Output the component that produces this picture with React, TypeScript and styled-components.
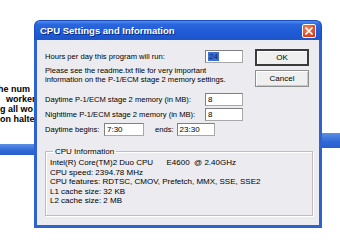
import React from 'react';
import styled, { createGlobalStyle } from 'styled-components';

const GlobalStyle = createGlobalStyle`
  html, body {
    margin: 0;
    padding: 0;
    background: #ffffff;
  }
  * {
    box-sizing: border-box;
  }
`;

const Desktop = styled.div`
  position: relative;
  width: 340px;
  height: 249px;
  overflow: hidden;
  background: #ffffff;
  font-family: 'Liberation Sans', Arial, sans-serif;
`;

// the window behind the dialog, only its left edge shows
const BackWindow = styled.div`
  position: absolute;
  left: 0;
  top: 0;
  width: 34px;
  height: 160px;
  background: #ffffff;
  overflow: hidden;
`;

const BackText = styled.div`
  padding-top: 84px;
  font-size: 9px;
  font-weight: bold;
  line-height: 10px;
  color: #000;
  white-space: pre;
`;

const BackLine = styled.div<{ $indent: number }>`
  text-indent: ${(p) => p.$indent}px;
`;

const BackBar = styled.div<{ $top: number; $height: number }>`
  margin-top: ${(p) => p.$top}px;
  height: ${(p) => p.$height}px;
  background: linear-gradient(#5b8ee6, #2f68d6 60%, #2a5fcc);
`;

// title bar of another window peeking out on the right
const SideBar = styled.div`
  position: absolute;
  left: 322px;
  top: 133px;
  width: 18px;
  height: 15px;
  background: linear-gradient(#5b8ee6, #2f68d6 60%, #2a5fcc);
`;

const Dialog = styled.div`
  position: absolute;
  left: 34px;
  top: 20px;
  width: 288px;
  height: 208px;
  display: flex;
  flex-direction: column;
`;

const TitleBar = styled.div`
  height: 20px;
  display: flex;
  align-items: center;
  justify-content: space-between;
  padding: 0 5px 0 5px;
  border-radius: 6px 6px 0 0;
  background: linear-gradient(
    #4f8df0 0%,
    #2a66dc 18%,
    #1f5bd6 60%,
    #1c55cc 100%
  );
  border: 1px solid #1a4bbf;
  border-bottom: none;
`;

const Title = styled.span`
  color: #ffffff;
  font-size: 9.5px;
  font-weight: bold;
  text-shadow: 1px 1px 0 #0a2a80;
`;

const CloseButton = styled.div`
  width: 14px;
  height: 14px;
  border: 1px solid #ffffff;
  border-radius: 2px;
  background: radial-gradient(circle at 35% 30%, #f2865f, #d9451d 70%, #c23a16);
  display: flex;
  align-items: center;
  justify-content: center;
`;

const Body = styled.div`
  flex: 1;
  display: flex;
  flex-direction: column;
  background: #ecebef;
  border: 3px solid #2c62d2;
  border-top: none;
  padding: 9px 8px 9px 8px;
  font-size: 7.6px;
  color: #000;
`;

const TopSection = styled.div`
  display: flex;
  gap: 12px;
`;

const Form = styled.div`
  width: 198px;
  margin-top: 1px;
  display: flex;
  flex-direction: column;
`;

const Row = styled.div<{ $gap: number }>`
  display: flex;
  align-items: center;
  justify-content: space-between;
  margin-top: ${(p) => p.$gap}px;
  height: 13px;
`;

const InlineRow = styled.div`
  display: flex;
  align-items: center;
  margin-top: 2px;
  height: 13px;
`;

const Label = styled.span<{ $width?: number; $ml?: number }>`
  white-space: nowrap;
  ${(p) => (p.$width ? `width: ${p.$width}px;` : '')}
  margin-left: ${(p) => p.$ml ?? 0}px;
`;

const Para = styled.p`
  margin: 3px 0 0 0;
  line-height: 9px;
`;

const Field = styled.div<{ $width: number; $ml?: number }>`
  width: ${(p) => p.$width}px;
  height: 13px;
  margin-left: ${(p) => p.$ml ?? 0}px;
  background: #ffffff;
  border: 1px solid #a8a8a8;
  border-top-color: #808080;
  border-left-color: #808080;
  display: flex;
  align-items: center;
  padding-left: 2px;
  line-height: 11px;
  font-size: 8px;
`;

const Selected = styled.span`
  background: #3a6fd0;
  color: #0f2460;
  padding: 0 1px;
  line-height: 9px;
`;

const Buttons = styled.div`
  display: flex;
  flex-direction: column;
  gap: 4px;
`;

const Button = styled.div<{ $default?: boolean }>`
  width: 54px;
  height: 17px;
  display: flex;
  align-items: center;
  justify-content: center;
  font-size: 8px;
  background: #efeff0;
  border: ${(p) => (p.$default ? '2px solid #3a3a3a' : '1px solid #8f8f8f')};
  box-shadow: ${(p) =>
    p.$default ? 'inset 1px 1px 0 #fff' : 'inset 1px 1px 0 #fff, inset -1px -1px 0 #c8c8c8'};
`;

const GroupBox = styled.fieldset`
  margin: 11px -2px 0 0;
  padding: 2px 5px 0 4px;
  border: 1px solid #bdbdbd;
  box-shadow: 1px 1px 0 #ffffff, inset 1px 1px 0 #ffffff;
  flex: 1;
  min-width: 0;
`;

const Legend = styled.legend`
  padding: 0 2px;
  margin-left: 3px;
  line-height: 9px;
  font-size: 8px;
`;

const InfoLine = styled.div`
  line-height: 9.5px;
  font-size: 8px;
  white-space: pre;
`;

const cpuLines = [
  'Intel(R) Core(TM)2 Duo CPU      E4600  @ 2.40GHz',
  'CPU speed: 2394.78 MHz',
  'CPU features: RDTSC, CMOV, Prefetch, MMX, SSE, SSE2',
  'L1 cache size: 32 KB',
  'L2 cache size: 2 MB',
];

// the visible fragments of the window behind
const backLines = [
  { text: 'he num', indent: -2 },
  { text: 'worker', indent: 6 },
  { text: 'g all wo', indent: 0 },
  { text: 'on halte', indent: 0 },
];

const App: React.FC = () => {
  return (
    <Desktop>
      <GlobalStyle />
      <BackWindow>
        <BackText>
          {backLines.map((l) => (
            <BackLine key={l.text} $indent={l.indent}>
              {l.text}
            </BackLine>
          ))}
        </BackText>
        <BackBar $top={20} $height={11} />
      </BackWindow>
      <SideBar />
      <Dialog>
        <TitleBar>
          <Title>CPU Settings and Information</Title>
          <CloseButton>
            <svg width="8" height="8" viewBox="0 0 8 8">
              <path d="M1 1 L7 7 M7 1 L1 7" stroke="#fff" strokeWidth="1.6" strokeLinecap="square" />
            </svg>
          </CloseButton>
        </TitleBar>
        <Body>
          <TopSection>
            <Form>
              <Row $gap={0}>
                <Label>Hours per day this program will run:</Label>
                <Field $width={38}>
                  <Selected>24</Selected>
                </Field>
              </Row>
              <Para>
                Please see the readme.txt file for very important
                <br />
                information on the P-1/ECM stage 2 memory settings.
              </Para>
              <Row $gap={9}>
                <Label>Daytime P-1/ECM stage 2 memory (in MB):</Label>
                <Field $width={38}>8</Field>
              </Row>
              <Row $gap={2}>
                <Label>Nighttime P-1/ECM stage 2 memory (in MB):</Label>
                <Field $width={38}>8</Field>
              </Row>
              <InlineRow>
                <Label $width={59}>Daytime begins:</Label>
                <Field $width={40}>7:30</Field>
                <Label $ml={11}>ends:</Label>
                <Field $width={38} $ml={3}>23:30</Field>
              </InlineRow>
            </Form>
            <Buttons>
              <Button $default>OK</Button>
              <Button>Cancel</Button>
            </Buttons>
          </TopSection>
          <GroupBox>
            <Legend>CPU Information</Legend>
            {cpuLines.map((l) => (
              <InfoLine key={l}>{l}</InfoLine>
            ))}
          </GroupBox>
        </Body>
      </Dialog>
    </Desktop>
  );
};

export default React.memo(App);
